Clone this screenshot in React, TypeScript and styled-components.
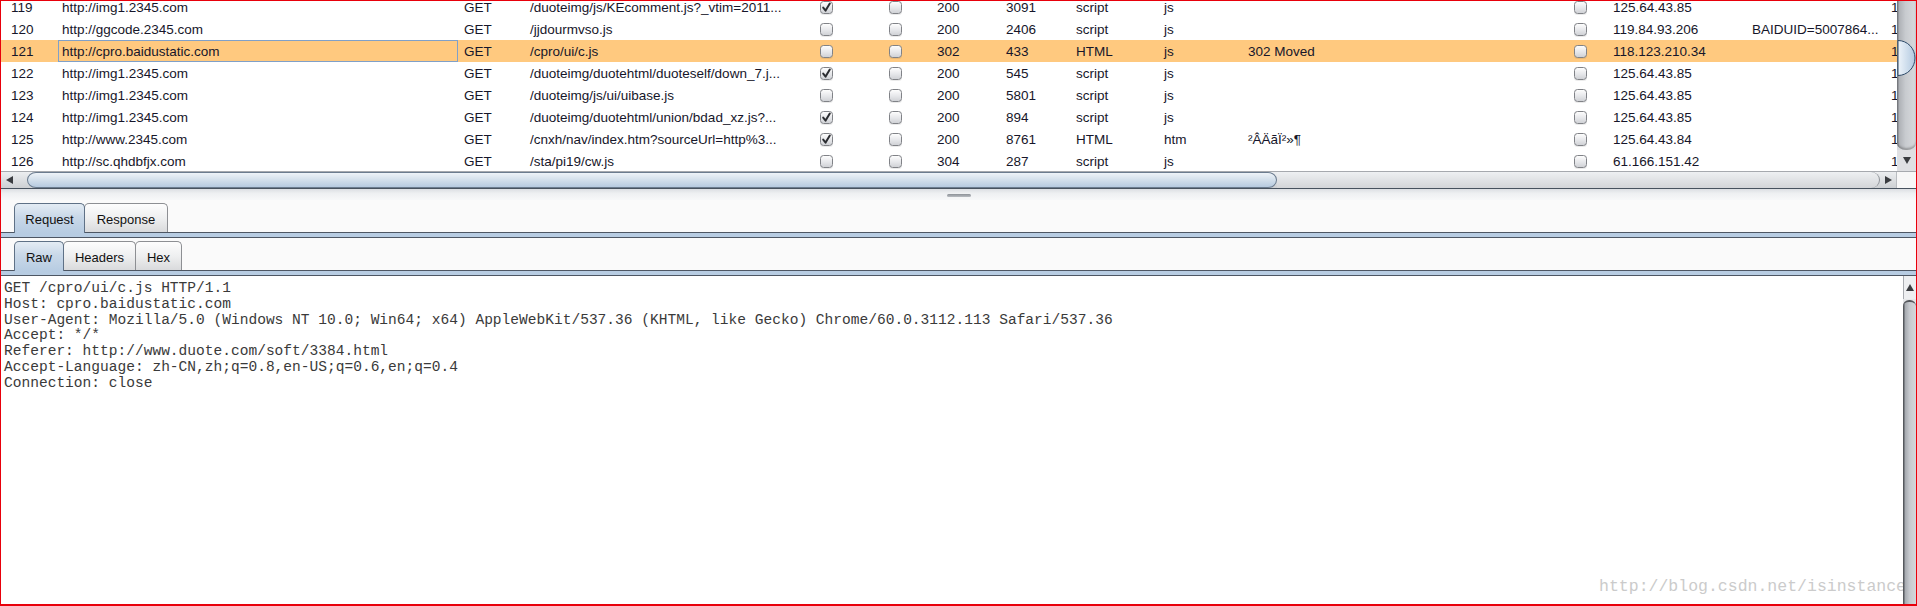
import React from 'react'
import styled, { createGlobalStyle } from 'styled-components'

const GlobalStyle = createGlobalStyle`
  html, body {
    margin: 0;
    padding: 0;
    background: #fff;
  }
  body {
    width: 1917px;
    height: 606px;
    overflow: hidden;
  }
`

const Frame = styled.div`
  width: 1917px;
  height: 606px;
  box-sizing: border-box;
  border: 1px solid #e8000b;
  border-bottom-width: 2px;
  display: flex;
  flex-direction: column;
  background: #fff;
  overflow: hidden;
`

/* ---------- history table ---------- */

const HistoryPane = styled.div`
  flex: none;
  display: flex;
  flex-direction: column;
`
const TableArea = styled.div`
  display: flex;
  height: 170px;
`
const Viewport = styled.div`
  flex: 1;
  min-width: 0;
  overflow: hidden;
  background: #fff;
`
const Rows = styled.div`
  margin-top: -5px;
`
const Row = styled.div<{ $selected?: boolean }>`
  display: flex;
  width: max-content;
  height: 22px;
  background: ${({ $selected }) => ($selected ? '#ffc97f' : '#fff')};
  font-family: 'Liberation Sans', Arial, sans-serif;
  font-size: 13.5px;
  color: #16162a;
`
const Cell = styled.div<{ $w: number; $pad?: number; $focus?: boolean }>`
  flex: none;
  width: ${({ $w }) => $w}px;
  padding-left: ${({ $pad }) => $pad ?? 5}px;
  box-sizing: border-box;
  height: 22px;
  display: flex;
  align-items: center;
  white-space: nowrap;
  overflow: hidden;
  ${({ $focus }) => ($focus ? 'box-shadow: inset 0 0 0 1px #80a0c8;' : '')}
`
const Check = styled.span`
  flex: none;
  width: 13px;
  height: 13px;
  box-sizing: border-box;
  border: 1px solid #808287;
  border-radius: 3.5px;
  background: linear-gradient(#fdfdfd, #e6e7ea 55%, #d0d2d6);
  box-shadow: 0 1px 0 rgba(0, 0, 0, 0.08);
  display: flex;
  align-items: center;
  justify-content: center;
`

const VBar = styled.div`
  flex: none;
  width: 19px;
  display: flex;
  flex-direction: column;
  background: #d8dadd;
`
const VTrack = styled.div`
  flex: 1;
  display: flex;
  flex-direction: column;
  background: linear-gradient(
    to right,
    #7e8086 0,
    #7e8086 1px,
    #aeb1b6 2px,
    #c8cbcf 45%,
    #d8dadd 100%
  );
  border-radius: 0 0 9px 9px / 0 0 7px 7px;
  box-shadow: inset 0 -2px 2px rgba(60, 60, 60, 0.35);
`
const VTrackGap = styled.div`
  flex: none;
  height: 39px;
`
const VArrow = styled.div`
  flex: none;
  height: 21px;
  display: flex;
  align-items: center;
  justify-content: center;
  background: #dfe0e3;
`

const HBar = styled.div`
  flex: none;
  display: flex;
  height: 18px;
  box-sizing: border-box;
  border-top: 1px solid #a6a9ae;
  border-bottom: 1px solid #47525e;
  background: linear-gradient(#eceef0, #cdd0d3);
`
const HArrow = styled.div<{ $w: number; $right?: boolean }>`
  flex: none;
  width: ${({ $w }) => $w}px;
  display: flex;
  align-items: center;
  justify-content: ${({ $right }) => ($right ? 'center' : 'flex-start')};
  padding-left: ${({ $right }) => ($right ? 0 : 5)}px;
  box-sizing: border-box;
`
const HThumb = styled.div`
  flex: none;
  width: 1250px;
  box-sizing: border-box;
  border: 1px solid #6b7c8f;
  border-radius: 9px / 8px;
  background: linear-gradient(#eef3f8, #d5e1ec 45%, #b6cadf);
`
const HTrack = styled.div`
  flex: 1;
  border-right: 1px solid #8c9096;
  border-radius: 0 9px 9px 0 / 0 8px 8px 0;
  background: linear-gradient(#eef0f2, #d3d5d8);
`
const Corner = styled.div`
  flex: none;
  width: 19px;
  background: #f7f7f7;
  border-left: 1px solid #b9bcc0;
`

/* ---------- split + tabs ---------- */

const Divider = styled.div`
  flex: none;
  height: 11px;
  box-sizing: border-box;
  padding-top: 5px;
  display: flex;
  justify-content: center;
  background: linear-gradient(#dcdfe3, #eef0f2 40%, #f7f8f9);
`
const Grip = styled.div`
  width: 24px;
  height: 3px;
  border-radius: 2px;
  background: linear-gradient(#8c9197, #b8bcc1);
`
const TabBar = styled.div`
  flex: none;
  display: flex;
  flex-direction: column;
  background: #fafafa;
`
const TabRow = styled.div`
  height: 32px;
  box-sizing: border-box;
  padding-left: 13px;
  display: flex;
  align-items: flex-end;
`
const Tab = styled.div<{ $active?: boolean; $w: number }>`
  position: relative;
  z-index: ${({ $active }) => ($active ? 1 : 0)};
  width: ${({ $w }) => $w}px;
  height: ${({ $active }) => ($active ? 30 : 29)}px;
  margin-bottom: ${({ $active }) => ($active ? -1 : 0)}px;
  box-sizing: border-box;
  padding-top: 2px;
  border: 1px solid ${({ $active }) => ($active ? '#5f7186' : '#8d8f93')};
  border-bottom: none;
  border-radius: 5px 5px 0 0;
  background: ${({ $active }) =>
    $active
      ? 'linear-gradient(#e4ecf4, #c9d8e8 45%, #b7cce2)'
      : 'linear-gradient(#fdfdfd, #eeeff0 50%, #d9dadc)'};
  display: flex;
  align-items: center;
  justify-content: center;
  font-family: 'Liberation Sans', Arial, sans-serif;
  font-size: 13px;
  color: #111;

  & + & {
    margin-left: -1px;
  }
`
const TabRule = styled.div`
  height: 6px;
  box-sizing: border-box;
  border-top: 1px solid #4d5663;
  border-bottom: 1px solid #4d5663;
  background: #b7cce2;
`

/* ---------- raw editor ---------- */

const Editor = styled.div`
  flex: 1;
  min-height: 0;
  display: flex;
`
const EditorText = styled.div`
  flex: 1;
  position: relative;
  overflow: hidden;
  padding: 5px 0 0 3px;
  font-family: 'Liberation Mono', 'Courier New', monospace;
  font-size: 14.55px;
  line-height: 15.8px;
  color: #3a3a3a;
  white-space: pre;
`
const EScroll = styled.div`
  flex: none;
  width: 13px;
  display: flex;
  flex-direction: column;
  background: #e6e7e9;
`
const EArrow = styled.div`
  flex: none;
  height: 23px;
  display: flex;
  align-items: center;
  justify-content: center;
  background: #eeeff1;
  border-left: 1px solid #a9acb1;
  box-sizing: border-box;
`
const EThumb = styled.div`
  flex: 1;
  margin-top: 1px;
  border-radius: 6px 6px 0 0;
  border-top: 2px solid #55585d;
  background: linear-gradient(
    to right,
    #56595e 0,
    #56595e 1px,
    #a5a9af 2px,
    #c6c9ce 50%,
    #d5d7da 100%
  );
`
const Watermark = styled.div`
  position: absolute;
  right: -3px;
  bottom: 7px;
  font-family: 'Liberation Mono', 'Courier New', monospace;
  font-size: 16.5px;
  line-height: 20px;
  color: #cbcbcb;
  pointer-events: none;
`

type Col = { w: number; pad?: number; check?: boolean }

const COLS: Col[] = [
  { w: 57, pad: 10 },
  { w: 400, pad: 4 },
  { w: 67, pad: 6 },
  { w: 275, pad: 5 },
  { w: 52, pad: 20, check: true },
  { w: 80, pad: 37, check: true },
  { w: 69 },
  { w: 70 },
  { w: 88 },
  { w: 84 },
  { w: 310 },
  { w: 55, pad: 21, check: true },
  { w: 139 },
  { w: 140 },
  { w: 60, pad: 4 }
]

// [num, host, method, url, params, edited, status, length, mime, ext, title, ssl, ip, cookies, time]
type Entry = (string | boolean)[]

const ENTRIES: Entry[] = [
  ['119', 'http://img1.2345.com', 'GET', '/duoteimg/js/KEcomment.js?_vtim=2011...', true, false, '200', '3091', 'script', 'js', '', false, '125.64.43.85', '', '1'],
  ['120', 'http://ggcode.2345.com', 'GET', '/jjdourmvso.js', false, false, '200', '2406', 'script', 'js', '', false, '119.84.93.206', 'BAIDUID=5007864...', '1'],
  ['121', 'http://cpro.baidustatic.com', 'GET', '/cpro/ui/c.js', false, false, '302', '433', 'HTML', 'js', '302 Moved', false, '118.123.210.34', '', '1'],
  ['122', 'http://img1.2345.com', 'GET', '/duoteimg/duotehtml/duoteself/down_7.j...', true, false, '200', '545', 'script', 'js', '', false, '125.64.43.85', '', '1'],
  ['123', 'http://img1.2345.com', 'GET', '/duoteimg/js/ui/uibase.js', false, false, '200', '5801', 'script', 'js', '', false, '125.64.43.85', '', '1'],
  ['124', 'http://img1.2345.com', 'GET', '/duoteimg/duotehtml/union/bdad_xz.js?...', true, false, '200', '894', 'script', 'js', '', false, '125.64.43.85', '', '1'],
  ['125', 'http://www.2345.com', 'GET', '/cnxh/nav/index.htm?sourceUrl=http%3...', true, false, '200', '8761', 'HTML', 'htm', '²ÂÄãÏ²»¶', false, '125.64.43.84', '', '1'],
  ['126', 'http://sc.qhdbfjx.com', 'GET', '/sta/pi19/cw.js', false, false, '304', '287', 'script', 'js', '', false, '61.166.151.42', '', '1']
]

const SELECTED = '121'

const REQUEST = `GET /cpro/ui/c.js HTTP/1.1
Host: cpro.baidustatic.com
User-Agent: Mozilla/5.0 (Windows NT 10.0; Win64; x64) AppleWebKit/537.36 (KHTML, like Gecko) Chrome/60.0.3112.113 Safari/537.36
Accept: */*
Referer: http://www.duote.com/soft/3384.html
Accept-Language: zh-CN,zh;q=0.8,en-US;q=0.6,en;q=0.4
Connection: close`

const CheckMark = () => (
  <svg width="11" height="11" viewBox="0 0 11 11">
    <path
      d="M2.2 5.6 L4.6 8.6 L8.8 1.6"
      fill="none"
      stroke="#2b2d31"
      strokeWidth="2"
      strokeLinecap="round"
      strokeLinejoin="round"
    />
  </svg>
)

const Arrow: React.FC<{ dir: 'up' | 'down' | 'left' | 'right' }> = ({ dir }) => {
  const d = {
    up: 'M0 7 L4 0 L8 7 Z',
    down: 'M0 0 L8 0 L4 7 Z',
    left: 'M7 0 L7 8 L0 4 Z',
    right: 'M0 0 L7 4 L0 8 Z'
  }[dir]
  const vertical = dir === 'up' || dir === 'down'
  return (
    <svg width={vertical ? 8 : 7} height={vertical ? 7 : 8} viewBox={vertical ? '0 0 8 7' : '0 0 7 8'}>
      <path d={d} fill="#3a3c40" />
    </svg>
  )
}

const ThumbCap = () => (
  <svg width="19" height="36" viewBox="0 0 19 36">
    <defs>
      <linearGradient id="cap" x1="0" y1="0" x2="1" y2="0">
        <stop offset="0" stopColor="#eef4fa" />
        <stop offset="1" stopColor="#b2c9e0" />
      </linearGradient>
    </defs>
    <path d="M1 0.5 A17 17.5 0 0 1 1 35.5 Z" fill="url(#cap)" stroke="#2e4a68" strokeWidth="1" />
  </svg>
)

const HistoryTable = () => (
  <HistoryPane>
    <TableArea>
      <Viewport>
        <Rows>
          {ENTRIES.map(entry => {
            const selected = entry[0] === SELECTED
            return (
              <Row key={entry[0] as string} $selected={selected}>
                {COLS.map((col, i) => (
                  <Cell key={i} $w={col.w} $pad={col.pad} $focus={selected && i === 1}>
                    {col.check ? <Check>{entry[i] ? <CheckMark /> : null}</Check> : entry[i]}
                  </Cell>
                ))}
              </Row>
            )
          })}
        </Rows>
      </Viewport>
      <VBar>
        <VTrack>
          <VTrackGap />
          <ThumbCap />
        </VTrack>
        <VArrow>
          <Arrow dir="down" />
        </VArrow>
      </VBar>
    </TableArea>
    <HBar>
      <HArrow $w={26}>
        <Arrow dir="left" />
      </HArrow>
      <HThumb />
      <HTrack />
      <HArrow $w={16} $right>
        <Arrow dir="right" />
      </HArrow>
      <Corner />
    </HBar>
  </HistoryPane>
)

const Tabs: React.FC<{ items: [string, number][]; active: number }> = ({ items, active }) => (
  <TabBar>
    <TabRow>
      {items.map(([label, w], i) => (
        <Tab key={label} $w={w} $active={i === active}>
          {label}
        </Tab>
      ))}
    </TabRow>
    <TabRule />
  </TabBar>
)

export default function App() {
  return (
    <>
      <GlobalStyle />
      <Frame>
        <HistoryTable />
        <Divider>
          <Grip />
        </Divider>
        <Tabs
          items={[
            ['Request', 71],
            ['Response', 84]
          ]}
          active={0}
        />
        <Tabs
          items={[
            ['Raw', 50],
            ['Headers', 73],
            ['Hex', 47]
          ]}
          active={0}
        />
        <Editor>
          <EditorText>
            {REQUEST}
            <Watermark>http://blog.csdn.net/isinstance</Watermark>
          </EditorText>
          <EScroll>
            <EArrow>
              <Arrow dir="up" />
            </EArrow>
            <EThumb />
          </EScroll>
        </Editor>
      </Frame>
    </>
  )
}
